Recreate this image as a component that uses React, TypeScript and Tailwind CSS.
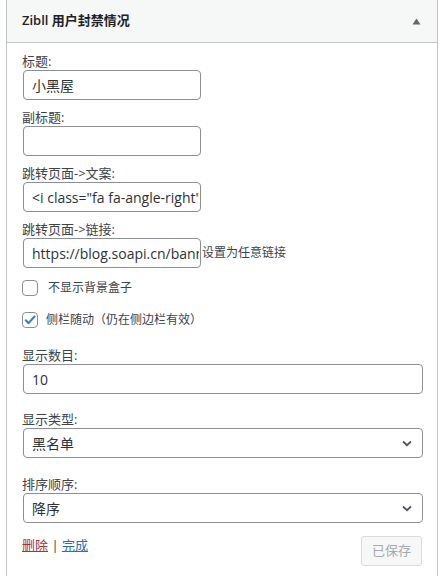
const font = { fontFamily: '"Open Sans", "Noto Sans CJK SC", sans-serif' }

function Field({ label, children }: { label: string; children: React.ReactNode }) {
  return (
    <div>
      <div className="h-[18px] text-[13px] leading-[18px] text-[#3c434a]">{label}</div>
      {children}
    </div>
  )
}

function TextInput({ value, wide }: { value: string; wide?: boolean }) {
  return (
    <div
      className={`mx-[1px] flex h-[30px] shrink-0 items-center overflow-hidden rounded-[4px] border border-[#8c8f94] bg-white pl-[8px] pr-[1px] text-[14px] text-[#2c3338] ${
        wide ? 'w-[400px]' : 'w-[178px]'
      }`}
    >
      <span className="block w-full overflow-hidden whitespace-nowrap">{value}</span>
    </div>
  )
}

function Select({ value }: { value: string }) {
  return (
    <div className="mx-[1px] flex h-[30px] w-[400px] items-center justify-between rounded-[4px] border border-[#8c8f94] bg-white pl-[8px] pr-[10px] text-[14px] text-[#2c3338]">
      <span>{value}</span>
      <svg width="10" height="7" viewBox="0 0 10 7" fill="none">
        <path d="M1 1.5 5 5.2 9 1.5" stroke="#50575e" strokeWidth="1.8" />
      </svg>
    </div>
  )
}

function Checkbox({ checked, label }: { checked?: boolean; label: string }) {
  return (
    <div className="flex h-[16px] items-center">
      <span className="flex h-[16px] w-[16px] items-center justify-center rounded-[4px] border border-[#8c8f94] bg-white">
        {checked && (
          <svg width="14" height="14" viewBox="0 0 20 20">
            <path d="M4 10.5 8 14.5 16.5 5" fill="none" stroke="#3582c4" strokeWidth="3" strokeLinecap="round" strokeLinejoin="round" />
          </svg>
        )}
      </span>
      <span className={`${checked ? 'ml-[8px]' : 'ml-[10px]'} text-[12px] text-[#3c434a]`}>{label}</span>
    </div>
  )
}

export default function App() {
  return (
    <div className="min-h-screen bg-white pl-[6px]" style={font}>
      <div className="min-h-[576px] w-[432px] border-x border-[#c3c4c7] bg-white">
        <div className="flex h-[43px] items-center justify-between border-b border-[#c3c4c7] bg-[#f6f7f7] pl-[15px] pr-[16px]">
          <h3 className="text-[13px] font-semibold text-[#1d2327]">Zibll 用户封禁情况</h3>
          <svg width="9" height="7" viewBox="0 0 9 7">
            <path d="M4.5 0.5 8.5 6.5H0.5Z" fill="#646970" />
          </svg>
        </div>

        <div className="pl-[15px] pr-[13px] pt-[9px]">
          <Field label="标题:">
            <TextInput value="小黑屋" />
          </Field>
          <div className="mt-[8px]">
            <Field label="副标题:">
              <TextInput value="" />
            </Field>
          </div>
          <div className="mt-[8px]">
            <Field label="跳转页面->文案:">
              <TextInput value={'<i class="fa fa-angle-right"></i>'} />
            </Field>
          </div>
          <div className="mt-[8px]">
            <Field label="跳转页面->链接:">
              <div className="flex items-center">
                <TextInput value="https://blog.soapi.cn/banned" />
                <span className="text-[12px] text-[#3c434a]">设置为任意链接</span>
              </div>
            </Field>
          </div>

          <div className="mt-[12px]">
            <Checkbox label="不显示背景盒子" />
          </div>
          <div className="mt-[16px]">
            <Checkbox checked label="侧栏随动（仍在侧边栏有效）" />
          </div>

          <div className="mt-[18px]">
            <Field label="显示数目:">
              <TextInput value="10" wide />
            </Field>
          </div>
          <div className="mt-[16px]">
            <Field label="显示类型:">
              <Select value="黑名单" />
            </Field>
          </div>
          <div className="mt-[17px]">
            <Field label="排序顺序:">
              <Select value="降序" />
            </Field>
          </div>

          <div className="mt-[13px] flex items-start justify-between">
            <div className="text-[13px] leading-[18px] text-[#3c434a]">
              <a className="text-[#b32d2e] underline">删除</a>
              <span> | </span>
              <a className="text-[#2271b1] underline">完成</a>
            </div>
            <button
              disabled
              className="mr-[2px] h-[30px] w-[61px] rounded-[3px] border border-[#dcdcde] bg-[#f6f7f7] text-[13px] text-[#a7aaad]"
            >
              已保存
            </button>
          </div>
        </div>
      </div>
    </div>
  )
}
